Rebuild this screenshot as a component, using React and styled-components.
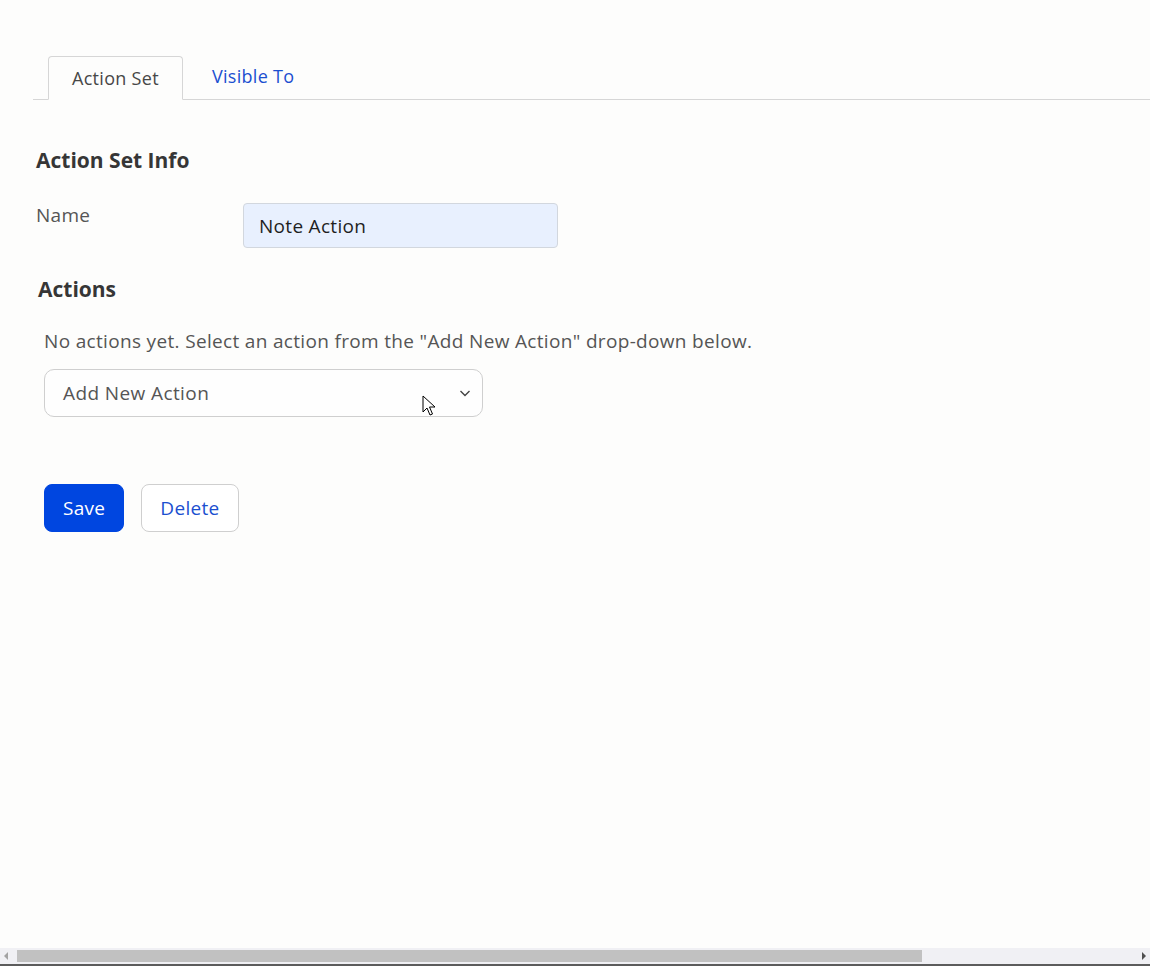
import styled, { createGlobalStyle } from 'styled-components';

const GlobalStyle = createGlobalStyle`
  html, body {
    margin: 0;
    padding: 0;
    background: #fdfdfc;
    font-family: "Open Sans", Lato, sans-serif;
  }
`;

const Page = styled.div`
  height: 966px;
  display: flex;
  flex-direction: column;
  overflow: hidden;
`;

const Main = styled.main`
  flex: 1;
  padding: 56px 0 0 33px;
`;

const TabBar = styled.nav`
  display: flex;
  align-items: flex-start;
  gap: 1px;
  height: 43px;
  padding-left: 15px;
  border-bottom: 1px solid #d6d6d6;
`;

const Tab = styled.button`
  box-sizing: border-box;
  height: ${(p) => (p.active ? '44px' : '39px')};
  padding: 0 ${(p) => (p.active ? '23px' : '27px')};
  background: ${(p) => (p.active ? '#fdfdfc' : 'transparent')};
  border: 1px solid ${(p) => (p.active ? '#d6d6d6' : 'transparent')};
  border-bottom-color: ${(p) => (p.active ? '#fdfdfc' : 'transparent')};
  border-radius: 4px 4px 0 0;
  font-family: inherit;
  font-size: 18px;
  letter-spacing: 0.3px;
  color: ${(p) => (p.active ? '#474747' : '#1b4fd0')};
  cursor: pointer;
`;

const Section = styled.section`
  padding: ${(p) => p.pad || '0'};
`;

const Heading = styled.h2`
  margin: 0;
  font-size: 21px;
  font-weight: 700;
  color: #363636;
  line-height: 28px;
`;

const FieldRow = styled.div`
  display: grid;
  grid-template-columns: 207px 315px;
  align-items: start;
  margin-top: 30px;
`;

const Label = styled.label`
  font-size: 19px;
  letter-spacing: 0.3px;
  line-height: 22px;
  color: #555555;
`;

const TextInput = styled.input`
  box-sizing: border-box;
  height: 45px;
  padding: 0 15px;
  background: #e8f0fe;
  border: 1px solid #d2d7de;
  border-radius: 4px;
  font-family: inherit;
  font-size: 19px;
  letter-spacing: 0.3px;
  color: #1f1f1f;
  margin-top: -1px;
  outline: none;
`;

const Hint = styled.p`
  margin: 27px 0 0 6px;
  font-size: 19px;
  letter-spacing: 0.33px;
  line-height: 23px;
  color: #555555;
`;

const SelectBox = styled.div`
  box-sizing: border-box;
  width: 439px;
  height: 48px;
  margin: 16px 0 0 6px;
  padding: 0 10px 0 18px;
  display: flex;
  align-items: center;
  justify-content: space-between;
  border: 1px solid #cfcfcf;
  border-radius: 10px;
  background: #fefefe;
  font-size: 19px;
  letter-spacing: 0.4px;
  color: #555555;
  position: relative;
`;

const Cursor = styled.svg`
  position: absolute;
  left: 377px;
  top: 25px;
`;

const Buttons = styled.div`
  display: flex;
  gap: 17px;
  margin: 67px 0 0 6px;
`;

const Button = styled.button`
  box-sizing: border-box;
  height: 48px;
  padding: 0 18px;
  border-radius: 8px;
  border: 1px solid ${(p) => (p.primary ? '#0046e0' : '#cfcfcf')};
  background: ${(p) => (p.primary ? '#0046e0' : '#ffffff')};
  color: ${(p) => (p.primary ? '#ffffff' : '#1b4fd0')};
  font-family: inherit;
  font-size: 19px;
  letter-spacing: 0.3px;
  cursor: pointer;
`;

const ScrollTrack = styled.div`
  height: 16px;
  display: flex;
  align-items: center;
  background: #f0f0f4;
  border-bottom: 2px solid #5c5c5c;
  padding: 0 4px;
  gap: 9px;
`;

const ScrollThumb = styled.div`
  height: 12px;
  width: 905px;
  background: #c1c1c1;
`;

const Arrow = styled.span`
  width: 0;
  height: 0;
  border-top: 4px solid transparent;
  border-bottom: 4px solid transparent;
  ${(p) => (p.dir === 'left' ? 'border-right: 4px solid #a3a3a3;' : 'border-left: 4px solid #505050;')}
  ${(p) => (p.dir === 'right' ? 'margin-left: auto;' : '')}
`;

export default function App() {
  return (
    <Page>
      <GlobalStyle />
      <Main>
        <TabBar>
          <Tab active>Action Set</Tab>
          <Tab>Visible To</Tab>
        </TabBar>

        <Section pad="46px 0 0 3px">
          <Heading>Action Set Info</Heading>
          <FieldRow>
            <Label>Name</Label>
            <TextInput defaultValue="Note Action" />
          </FieldRow>
        </Section>

        <Section pad="27px 0 0 5px">
          <Heading>Actions</Heading>
        </Section>

        <Section pad="0 0 0 5px">
          <Hint>No actions yet. Select an action from the "Add New Action" drop-down below.</Hint>
          <SelectBox>
            <span>Add New Action</span>
            <svg width="14" height="14" viewBox="0 0 14 14" fill="none">
              <path d="M2.5 5l4.5 4.5L11.5 5" stroke="#444" strokeWidth="1.4" />
            </svg>
            <Cursor width="13" height="21" viewBox="0 0 13 21">
              <path
                d="M1 1v16l4-4 3 7 2.5-1-3-7h5.5z"
                fill="#fff"
                stroke="#000"
                strokeWidth="1"
                strokeLinejoin="round"
              />
            </Cursor>
          </SelectBox>
          <Buttons>
            <Button primary>Save</Button>
            <Button>Delete</Button>
          </Buttons>
        </Section>
      </Main>
      <ScrollTrack>
        <Arrow dir="left" />
        <ScrollThumb />
        <Arrow dir="right" />
      </ScrollTrack>
    </Page>
  );
}
